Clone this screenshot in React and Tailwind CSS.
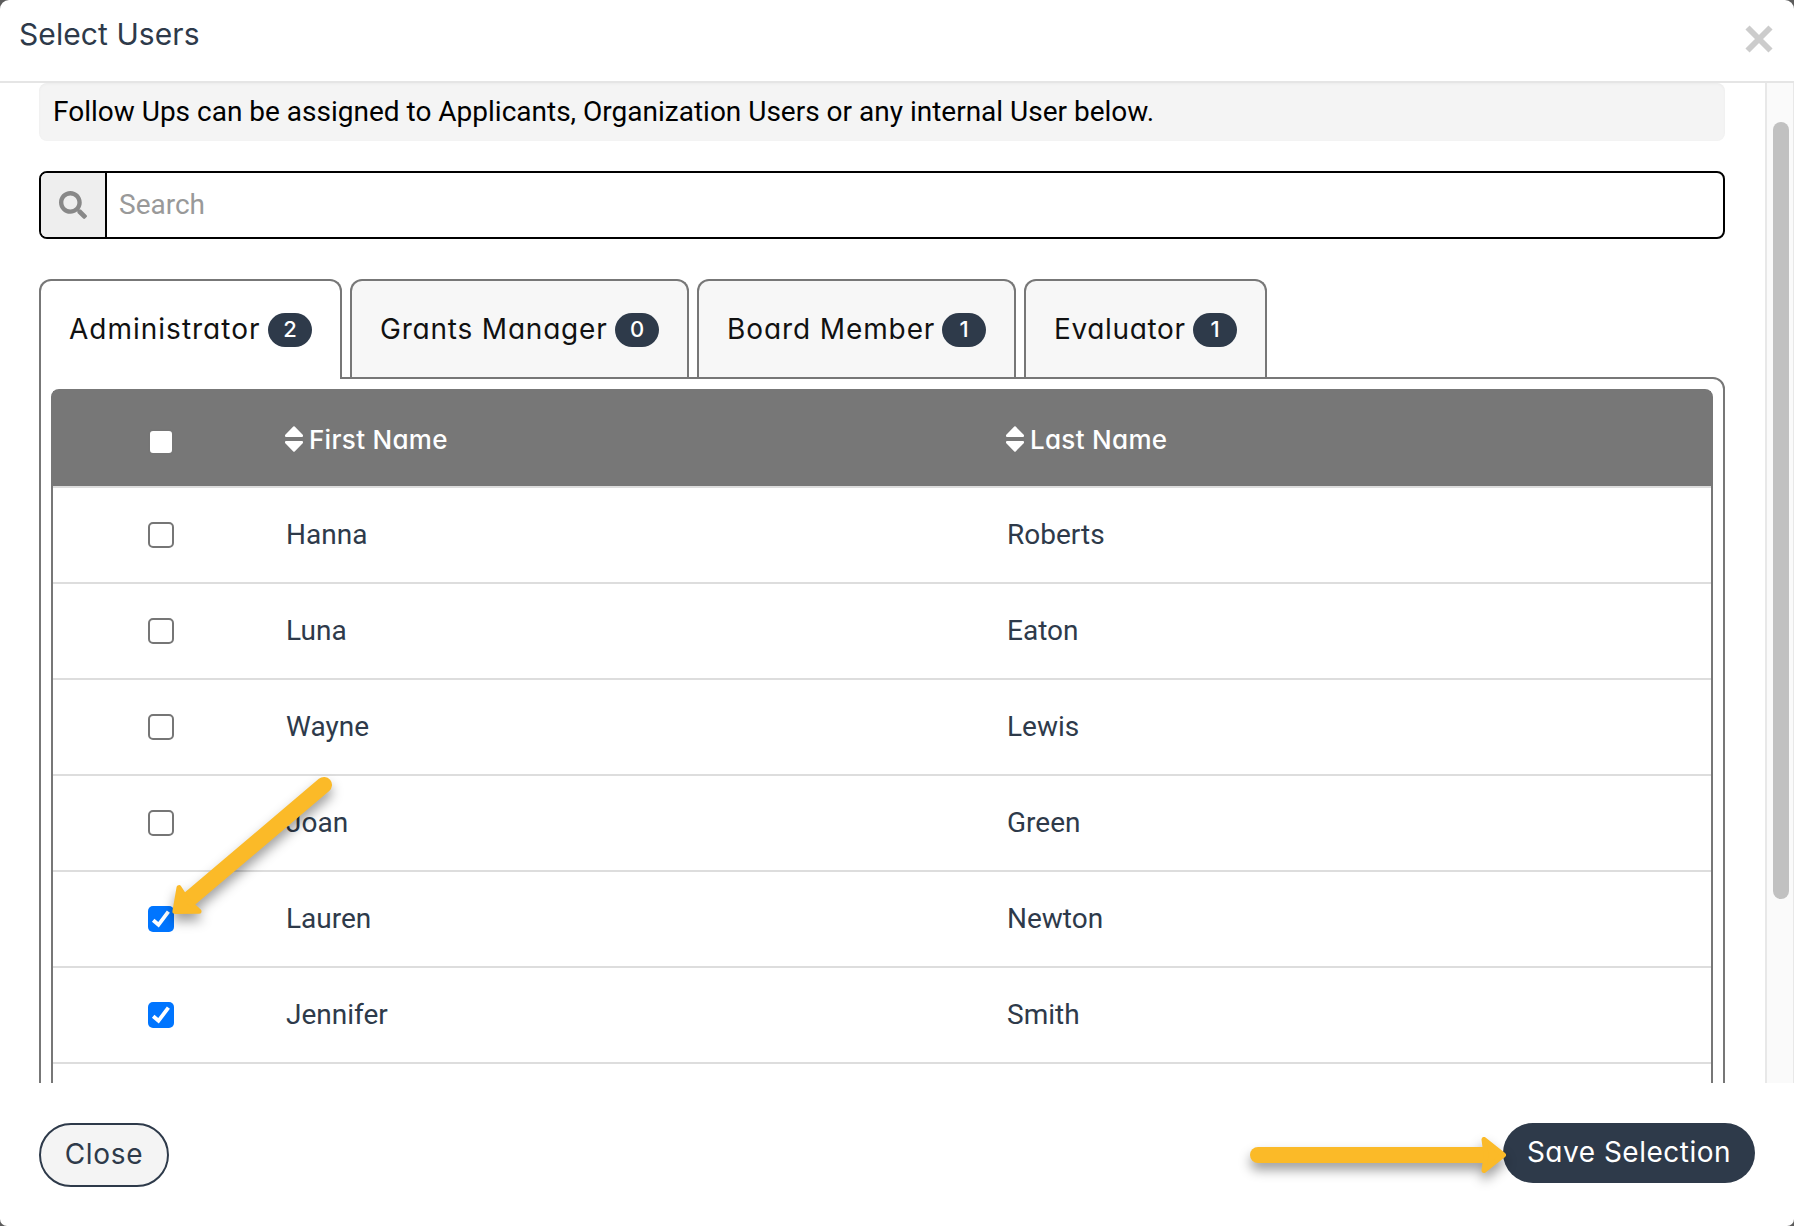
import React, { useState } from 'react';
import { FaSearch } from 'react-icons/fa';

const tabs = [
  { name: 'Administrator', count: 2, width: 'w-[303px]', label: 'tracking-[1px]' },
  { name: 'Grants Manager', count: 0, width: 'w-[339px]', label: 'tracking-[0.8px]' },
  { name: 'Board Member', count: 1, width: 'w-[319px]', label: 'tracking-[0.9px]' },
  { name: 'Evaluator', count: 1, width: 'w-[243px]', label: 'tracking-[0.65px]' },
];

const users = [
  { first: 'Hanna', last: 'Roberts' },
  { first: 'Luna', last: 'Eaton' },
  { first: 'Wayne', last: 'Lewis' },
  { first: 'Joan', last: 'Green' },
  { first: 'Lauren', last: 'Newton' },
  { first: 'Jennifer', last: 'Smith' },
];

// Round headings font, with the single-storey "a"
const heading = "font-['Inter',sans-serif] [font-feature-settings:'cv11']";

function Checkbox({ checked, onChange }) {
  return (
    <button
      type="button"
      role="checkbox"
      aria-checked={checked}
      onClick={onChange}
      className={`block size-[26px] rounded-[5px] ${checked ? 'bg-[#0075ff]' : 'border-2 border-[#767676] bg-white'}`}
    >
      {checked && (
        <svg viewBox="0 0 26 26" className="size-full" fill="none" stroke="#fff" strokeWidth="3.8">
          <path d="M5.2 14.2l5.3 4.6L20.4 5.6" />
        </svg>
      )}
    </button>
  );
}

function SortIcon() {
  return (
    <svg viewBox="0 0 18 26" className="w-[18px] h-[26px] mt-px shrink-0" fill="#fff" stroke="#fff" strokeWidth="2" strokeLinejoin="round">
      <path d="M9 1.3L17 9.5V10H1V9.5z" />
      <path d="M9 24.7L17 16.5V16H1V16.5z" />
    </svg>
  );
}

// Arrow pointing right, its tip at 0,0
function Arrow({ length, head }) {
  const tail = -length + 8;
  return (
    <g fill="#fbba28" stroke="#fbba28" strokeLinejoin="round" strokeLinecap="round">
      <path d={`M${tail} 0H-14`} strokeWidth="16" />
      <path d={`M-2.5 0L${-head} -15.5L${-head + 2} 0L${-head} 15.5z`} strokeWidth="5" />
    </g>
  );
}

export default function App() {
  const [active, setActive] = useState(0);
  const [selected, setSelected] = useState([4, 5]);
  const [search, setSearch] = useState('');

  const toggle = (idx) => {
    setSelected(selected.includes(idx) ? selected.filter((i) => i !== idx) : [...selected, idx]);
  };

  return (
    <div className="relative w-[1794px] h-[1226px] overflow-hidden bg-[#5c5c5c]">
      <div className="flex flex-col h-full bg-white rounded-t-[9px] rounded-b-[7px] overflow-hidden">
        <header className="flex justify-between h-[83px] shrink-0 border-b-2 border-[#e5e5e5] pl-[19px] pr-[21px]">
          <h1 className={`${heading} pt-[13px] text-[30px] leading-[42px] tracking-[0.08px] text-[#2e3a4a]`}>Select Users</h1>
          <button type="button" aria-label="Close" className="h-[78px]">
            <svg viewBox="0 0 28 28" className="size-7" stroke="#ccc" strokeWidth="5.8">
              <path d="M2.5 2.5L25.5 25.5M25.5 2.5L2.5 25.5" />
            </svg>
          </button>
        </header>

        <main className="flex h-[1000px] shrink-0 overflow-hidden">
          <div className="w-[1765px] pl-[39px] pr-10">
            <div className="h-[58px] rounded-lg bg-[#f4f4f4] pl-3.5 pt-[9px] font-['Roboto',sans-serif] text-[28px] leading-[40px] text-black shadow-[inset_0_1px_3px_rgba(0,0,0,0.04)]">
              Follow Ups can be assigned to Applicants, Organization Users or any internal User below.
            </div>

            <div className="flex h-[68px] mt-[30px] border-2 border-black rounded-lg overflow-hidden">
              <span className="flex w-[66px] items-center pl-[18px] pb-px border-r-2 border-black bg-[#eee]">
                <FaSearch className="size-7 text-[#888]" />
              </span>
              <input
                className="flex-1 pl-3 pb-px font-['Roboto',sans-serif] text-[28px] placeholder:text-[#999] focus:outline-none"
                placeholder="Search"
                value={search}
                onChange={(e) => setSearch(e.target.value)}
              />
            </div>

            <div className="flex gap-2 mt-10">
              {tabs.map((tab, idx) => (
                <button
                  key={tab.name}
                  type="button"
                  onClick={() => setActive(idx)}
                  className={`${tab.width} ${heading} z-10 flex shrink-0 justify-between border-2 border-[#777] rounded-t-xl pl-7 pr-7 text-[28px] text-[#111] ${
                    idx === active ? 'h-[100px] -mb-0.5 border-b-0 bg-white' : 'h-[98px] border-b-0 bg-[#f7f7f7]'
                  }`}
                >
                  <span className={`${tab.label} mt-7 leading-[40px] whitespace-nowrap`}>{tab.name}</span>
                  <span className="w-11 h-[34px] mt-8 rounded-[17px] bg-[#2e3a4a] text-[22px] leading-[33px] font-medium text-white text-center">
                    {tab.count}
                  </span>
                </button>
              ))}
            </div>

            <div className="h-[740px] border-2 border-[#777] rounded-tr-xl p-2.5">
              <div className="h-[740px] border-2 border-[#777] rounded-t-lg">
                <div className={`${heading} grid grid-cols-[232px_721px_1fr] h-[97px] border-b-2 border-[#ddd] bg-[#777] text-[26px] tracking-[0.3px] font-medium text-white`}>
                  <div className="pl-[95px] pt-[38px]">
                    <Checkbox checked={false} />
                  </div>
                  <div className="flex pt-[34px] gap-1.5">
                    <SortIcon />
                    <span className="leading-[30px]">First Name</span>
                  </div>
                  <div className="flex pt-[34px] gap-1.5">
                    <SortIcon />
                    <span className="leading-[30px]">Last Name</span>
                  </div>
                </div>

                {users.map((user, idx) => (
                  <div
                    key={user.first}
                    className="grid grid-cols-[232px_721px_1fr] items-center h-24 border-b-2 border-[#ddd] font-['Roboto',sans-serif] text-[28px] text-[#2e3a4a]"
                  >
                    <div className="pl-[95px]">
                      <Checkbox checked={selected.includes(idx)} onChange={() => toggle(idx)} />
                    </div>
                    <div className="pl-px">{user.first}</div>
                    <div className="pl-px">{user.last}</div>
                  </div>
                ))}
              </div>
            </div>
          </div>

          {/* Scrollbar */}
          <div className="w-[29px] border-l-2 border-r border-[#e8e8e8] bg-[#fafafa] pl-1.5 pt-[39px]">
            <div className="w-4 h-[777px] rounded-full bg-[#c1c1c1]" />
          </div>
        </main>

        <footer className="flex justify-between items-start pt-10 pl-[39px] pr-[39px]">
          <button type="button" className={`${heading} w-[130px] h-16 pb-0.5 border-2 border-[#2e3a4a] rounded-full bg-[#f4f4f4] text-[28px] tracking-[0.7px] text-[#2e3a4a]`}>
            Close
          </button>
          <button type="button" className={`${heading} w-[252px] h-[60px] pb-0.5 rounded-full bg-[#2e3a4a] text-[28px] tracking-[0.5px] whitespace-nowrap text-white`}>
            Save Selection
          </button>
        </footer>
      </div>

      {/* Arrows drawn over the dialog */}
      <svg viewBox="0 0 1794 1226" className="absolute inset-0 size-full pointer-events-none">
        <g className="drop-shadow-[0_7px_6px_rgba(0,0,0,0.38)]">
          <g transform="translate(173 913) rotate(139.7)">
            <Arrow length={206} head={21} />
          </g>
        </g>
        <g className="drop-shadow-[0_7px_6px_rgba(0,0,0,0.38)]">
          <g transform="translate(1506 1155)">
            <Arrow length={256} head={22} />
          </g>
        </g>
      </svg>
    </div>
  );
}
